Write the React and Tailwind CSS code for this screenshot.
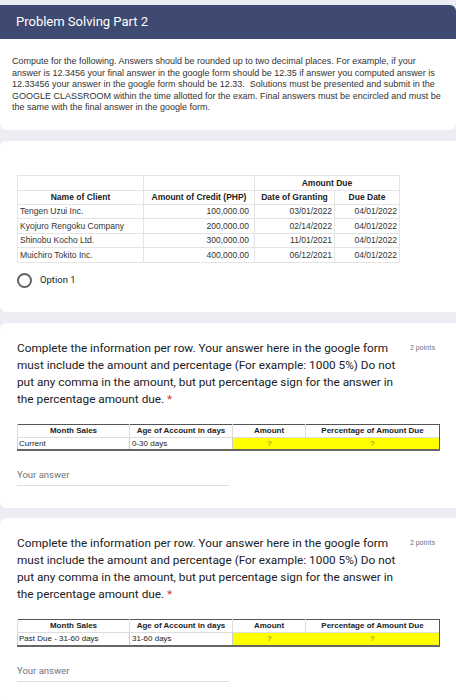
import React from 'react'

const CLIENTS = [
  ['Tengen Uzui Inc.', '100,000.00', '03/01/2022', '04/01/2022'],
  ['Kyojuro Rengoku Company', '200,000.00', '02/14/2022', '04/01/2022'],
  ['Shinobu Kocho Ltd.', '300,000.00', '11/01/2021', '04/01/2022'],
  ['Muichiro Tokito Inc.', '400,000.00', '06/12/2021', '04/01/2022'],
]

const INTRO = [
  'Compute for the following. Answers should be rounded up to two decimal places. For example, if your',
  'answer is 12.3456 your final answer in the google form should be 12.35 if answer you computed answer is',
  '12.33456 your answer in the google form should be 12.33.\u00a0 Solutions must be presented and submit in the',
  'GOOGLE CLASSROOM within the time allotted for the exam. Final answers must be encircled and must be',
  'the same with the final answer in the google form.',
]

const QUESTION =
  'Complete the information per row. Your answer here in the google form must include the amount and percentage (For example: 1000 5%) Do not put any comma in the amount, but put percentage sign for the answer in the percentage amount due.'

function AgingTable({ month, age }) {
  return (
    <table
      className="border-collapse text-[8px] leading-none text-[#222]"
      style={{ fontFamily: '"Liberation Sans", Arial, sans-serif' }}
    >
      <colgroup>
        <col className="w-[112px]" />
        <col className="w-[103px]" />
        <col className="w-[73px]" />
        <col className="w-[134px]" />
      </colgroup>
      <thead>
        <tr className="h-[13px] border-t border-[#555] font-bold">
          <th className="border-l border-r border-[#ddd] text-center">Month Sales</th>
          <th className="border-r border-[#ddd] text-center">Age of Account in days</th>
          <th className="border-r border-[#ddd] text-center">Amount</th>
          <th className="border-r border-[#555] text-center">Percentage of Amount Due</th>
        </tr>
      </thead>
      <tbody>
        <tr className="h-[13px] border-t border-[#ddd] border-b-2 border-b-[#666]">
          <td className="border-l border-r border-[#ccc] pl-[1px]">{month}</td>
          <td className="border-r border-[#ccc] pl-[2px]">{age}</td>
          <td className="bg-[#ffff00] text-center text-[#8c7a12]">?</td>
          <td className="bg-[#ffff00] text-center text-[#8c7a12] border-r border-[#555]">?</td>
        </tr>
      </tbody>
    </table>
  )
}

function QuestionCard({ month, age }) {
  return (
    <div className="bg-white rounded-l-[6px] pl-[17px] pr-[10px] pt-[17px] pb-[22px]">
      <div className="flex items-start">
        <p className="w-[387px] text-[11.8px] leading-[17px] text-[#202124]">
          {QUESTION}
          <span className="text-[#d93025]"> *</span>
        </p>
        <span className="ml-[6px] mt-[3px] whitespace-nowrap text-[7px] text-[#70757a]">2 points</span>
      </div>
      <div className="mt-[16px]">
        <AgingTable month={month} age={age} />
      </div>
      <div className="mt-[18px] w-[212px] border-b border-[#e0e0e0] pb-[4px] text-[9.5px] leading-[12px] text-[#70757a]">
        Your answer
      </div>
    </div>
  )
}

export default function App() {
  return (
    <div
      className="w-[456px] min-h-[700px] bg-[#eceef4] pt-[5px]"
      style={{ fontFamily: 'Roboto, "Liberation Sans", Arial, sans-serif' }}
    >
      {/* Section header */}
      <div className="h-[34px] bg-[#3e4a72] rounded-tr-[6px] pl-[16px] flex items-center">
        <h1 className="text-[13px] text-white">Problem Solving Part 2</h1>
      </div>
      <div className="bg-white rounded-b-[6px] pl-[12px] pt-[17px] pb-[16px]">
        <div
          className="text-[9px] leading-[11.6px] text-[#333]"
          style={{ fontFamily: '"Liberation Sans", Arial, sans-serif' }}
        >
          {INTRO.map((line) => (
            <div key={line} className="whitespace-nowrap">{line}</div>
          ))}
        </div>
      </div>

      {/* Option question */}
      <div className="mt-[11px] bg-white rounded-l-[6px] pl-[17px] pt-[34px] pb-[24px]">
        <table
          className="border-collapse text-[8.5px] leading-none text-[#333]"
          style={{ fontFamily: '"Liberation Sans", Arial, sans-serif' }}
        >
          <colgroup>
            <col className="w-[126px]" />
            <col className="w-[111px]" />
            <col className="w-[80px]" />
            <col className="w-[65px]" />
          </colgroup>
          <thead className="font-bold text-[#222]">
            <tr className="h-[15px]">
              <th className="border border-[#e4e4e4]"></th>
              <th className="border border-[#e4e4e4]"></th>
              <th colSpan={2} className="border border-[#e4e4e4] text-center">Amount Due</th>
            </tr>
            <tr className="h-[14px]">
              <th className="border border-[#e4e4e4] text-center">Name of Client</th>
              <th className="border border-[#e4e4e4] text-center whitespace-nowrap">Amount of Credit (PHP)</th>
              <th className="border border-[#e4e4e4] text-center whitespace-nowrap">Date of Granting</th>
              <th className="border border-[#e4e4e4] text-center">Due Date</th>
            </tr>
          </thead>
          <tbody>
            {CLIENTS.map((c) => (
              <tr key={c[0]} className="h-[14.5px]">
                <td className="border border-[#e4e4e4] pl-[2px] whitespace-nowrap">{c[0]}</td>
                <td className="border border-[#e4e4e4] pr-[5px] text-right">{c[1]}</td>
                <td className="border border-[#e4e4e4] pr-[2px] text-right">{c[2]}</td>
                <td className="border border-[#e4e4e4] pr-[2px] text-right">{c[3]}</td>
              </tr>
            ))}
          </tbody>
        </table>
        <div className="mt-[10px] flex items-center">
          <span className="w-[15px] h-[15px] rounded-full border-2 border-[#5f6368]" />
          <span className="ml-[8px] text-[9.5px] text-[#202124]">Option 1</span>
        </div>
      </div>

      <div className="mt-[11px]">
        <QuestionCard month="Current" age="0-30 days" />
      </div>
      <div className="mt-[10px]">
        <QuestionCard month="Past Due - 31-60 days" age="31-60 days" />
      </div>
    </div>
  )
}
